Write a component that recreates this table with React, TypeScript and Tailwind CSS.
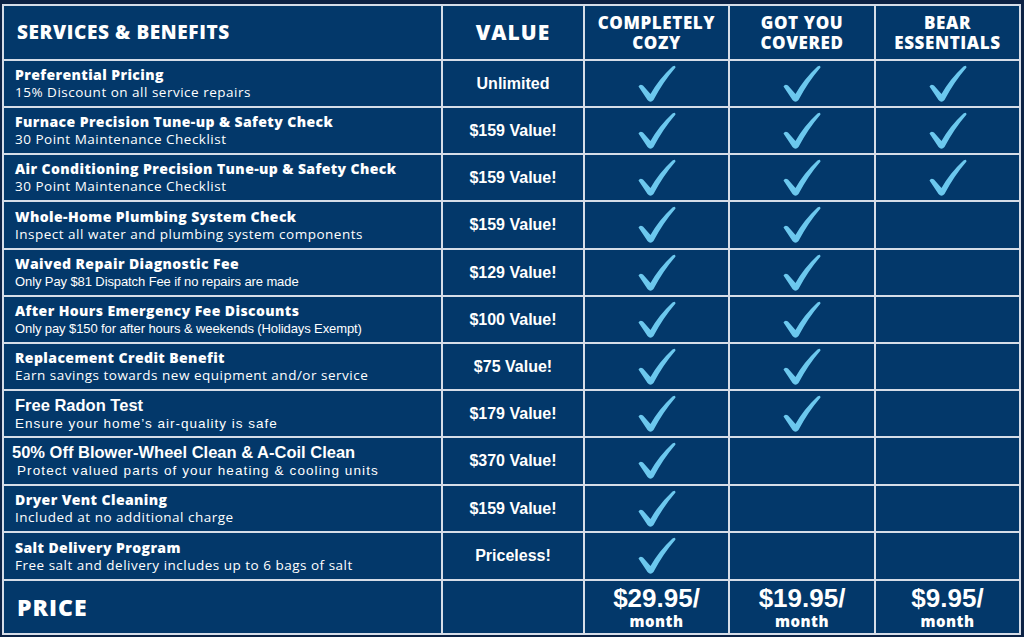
const heavy = "font-['Open_Sans','Liberation_Sans',sans-serif] font-extrabold"
const book = "font-['Open_Sans','Liberation_Sans',sans-serif]"
const arial = "font-['Liberation_Sans',Arial,sans-serif]"

type Row = {
    title: string
    sub: string
    value: string
    checks: number
    style?: "arial" | "arialTrack" | "arialSub"
}

const rows: Row[] = [
    { title: "Preferential Pricing", sub: "15% Discount on all service repairs", value: "Unlimited", checks: 3 },
    { title: "Furnace Precision Tune-up & Safety Check", sub: "30 Point Maintenance Checklist", value: "$159 Value!", checks: 3 },
    { title: "Air Conditioning Precision Tune-up & Safety Check", sub: "30 Point Maintenance Checklist", value: "$159 Value!", checks: 3 },
    { title: "Whole-Home Plumbing System Check", sub: "Inspect all water and plumbing system components", value: "$159 Value!", checks: 2 },
    { title: "Waived Repair Diagnostic Fee", sub: "Only Pay $81 Dispatch Fee if no repairs are made", value: "$129 Value!", checks: 2, style: "arialSub" },
    { title: "After Hours Emergency Fee Discounts", sub: "Only pay $150 for after hours & weekends (Holidays Exempt)", value: "$100 Value!", checks: 2, style: "arialSub" },
    { title: "Replacement Credit Benefit", sub: "Earn savings towards new equipment and/or service", value: "$75 Value!", checks: 2 },
    { title: "Free Radon Test", sub: "Ensure your home’s air-quality is safe", value: "$179 Value!", checks: 2, style: "arialTrack" },
    { title: "50% Off Blower-Wheel Clean & A-Coil Clean", sub: "Protect valued parts of your heating & cooling units", value: "$370 Value!", checks: 1, style: "arial" },
    { title: "Dryer Vent Cleaning", sub: "Included at no additional charge", value: "$159 Value!", checks: 1 },
    { title: "Salt Delivery Program", sub: "Free salt and delivery includes up to 6 bags of salt", value: "Priceless!", checks: 1 },
]

function Check() {
    return (
        <svg width="40" height="38" viewBox="0 0 40 38">
            <path
                d="M1.5 21.5 Q3 18.5 6 20.5 L13.5 29 Q22 14 35.5 1.5 Q38.5 -0.5 38.5 2.5 Q26 17 16.5 35 Q13.5 38.5 10.5 35 Z"
                fill="#6cc8ee"
            />
        </svg>
    )
}

function Cell({ children, className = "" }: { children?: React.ReactNode; className?: string }) {
    return <div className={`bg-[#03386a] text-white flex items-center justify-center ${className}`}>{children}</div>
}

export default function App() {
    return (
        <div className="w-[1024px] h-[637px] bg-[#0c2244] pt-[4px] pl-[2px] overflow-hidden">
            <div className="w-[1019px] grid bg-[#d6dde8] p-[2px] gap-[2px] grid-cols-[437px_140px_143px_144px_143px] grid-rows-[53px_45px_45px_45px_46px_45px_45px_45px_45px_46px_45px_46px_52px]">
                {/* header */}
                <Cell className="!justify-start pl-[13px]">
                    <span className={`${heavy} text-[19px] tracking-[0.6px]`}>SERVICES &amp; BENEFITS</span>
                </Cell>
                <Cell>
                    <span className={`${heavy} text-[21px] tracking-[1px]`}>VALUE</span>
                </Cell>
                <Cell>
                    <span className={`${heavy} text-[17px] leading-[20px] tracking-[0.6px] text-center`}>COMPLETELY<br />COZY</span>
                </Cell>
                <Cell>
                    <span className={`${heavy} text-[17px] leading-[20px] tracking-[0.6px] text-center`}>GOT YOU<br />COVERED</span>
                </Cell>
                <Cell>
                    <span className={`${heavy} text-[17px] leading-[20px] tracking-[0.6px] text-center`}>BEAR<br />ESSENTIALS</span>
                </Cell>

                {rows.map((r) => (
                    <RowCells key={r.title} row={r} />
                ))}

                {/* price */}
                <Cell className="!justify-start pl-[13px]">
                    <span className={`${heavy} text-[23px] tracking-[1px]`}>PRICE</span>
                </Cell>
                <Cell />
                <Price amount="$29.95/" />
                <Price amount="$19.95/" />
                <Price amount="$9.95/" />
            </div>
        </div>
    )
}

function RowCells({ row }: { row: Row }) {
    const isArialTitle = row.style === "arial" || row.style === "arialTrack"
    return (
        <>
            <Cell className="!items-start flex-col pl-[11px]">
                {isArialTitle ? (
                    <div className={`${arial} text-[16.5px] font-bold leading-[19px] ${row.style === "arial" ? "-ml-[3px]" : ""}`}>{row.title}</div>
                ) : (
                    <div className={`${heavy} text-[14px] leading-[17px] tracking-[0.4px]`}>{row.title}</div>
                )}
                {row.style === "arialSub" ? (
                    <div className={`${arial} text-[13px] leading-[17px] mt-[1px] tracking-[-0.1px]`}>{row.sub}</div>
                ) : isArialTitle ? (
                    <div className={`${arial} text-[13.5px] leading-[17px] ${row.style === "arial" ? "pl-[2px] tracking-[1.1px]" : "tracking-[1px]"}`}>{row.sub}</div>
                ) : (
                    <div className={`${book} text-[13.5px] leading-[17px] mt-[1px] tracking-[0.5px]`}>{row.sub}</div>
                )}
            </Cell>
            <Cell>
                <span className={`${arial} text-[16px] font-bold`}>{row.value}</span>
            </Cell>
            <Cell>{row.checks >= 1 && <Check />}</Cell>
            <Cell>{row.checks >= 2 && <Check />}</Cell>
            <Cell>{row.checks >= 3 && <Check />}</Cell>
        </>
    )
}

function Price({ amount }: { amount: string }) {
    return (
        <Cell className="flex-col">
            <span className={`${arial} text-[26px] font-bold leading-[27px]`}>{amount}</span>
            <span className={`${heavy} text-[15px] leading-[15px] mt-[2px] tracking-[0.5px]`}>month</span>
        </Cell>
    )
}
